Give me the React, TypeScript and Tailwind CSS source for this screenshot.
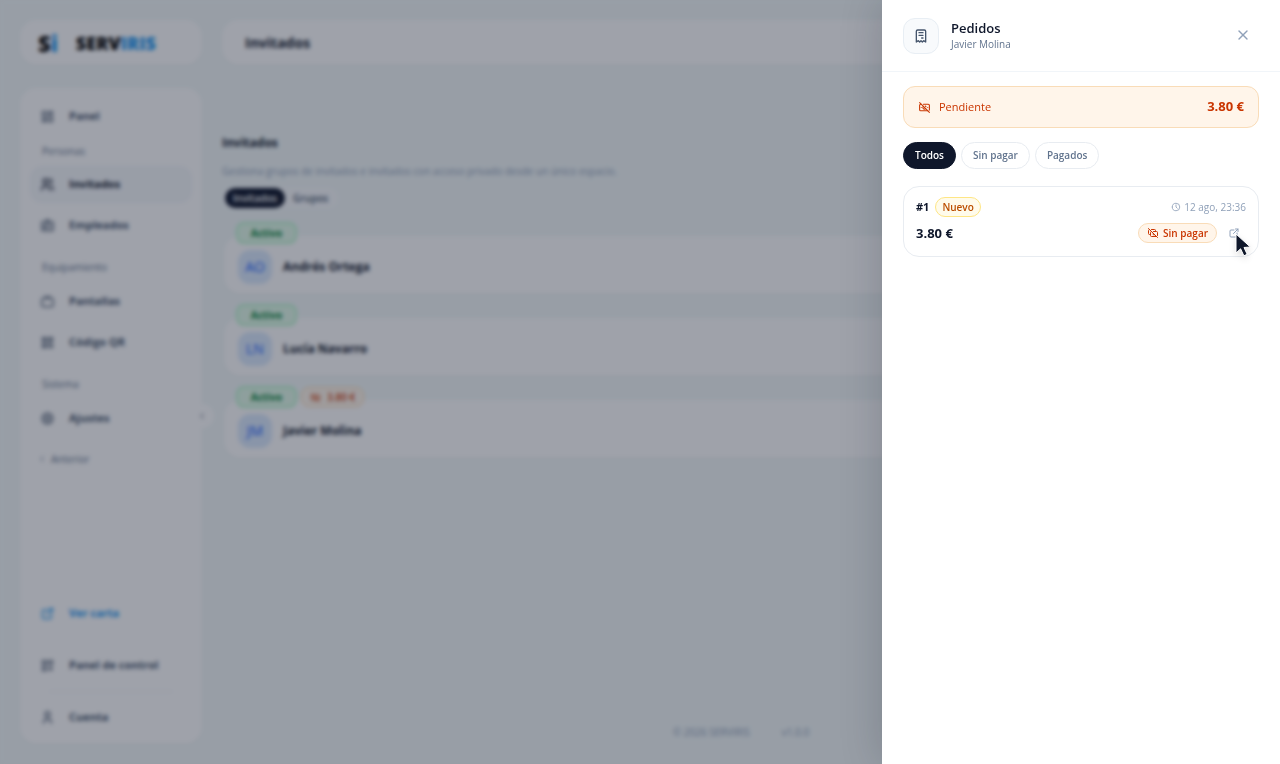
import React, { useState } from 'react';
import {
  TbCashBanknoteOff,
  TbCashOff,
  TbChevronLeft,
  TbClock,
  TbDeviceTv,
  TbExternalLink,
  TbIdBadge2,
  TbLayoutDashboard,
  TbLayoutGridAdd,
  TbQrcode,
  TbReceipt,
  TbSettings,
  TbUser,
  TbUsers,
  TbX,
} from 'react-icons/tb';
import type { IconType } from 'react-icons';

interface NavItemProps {
  icon: IconType;
  label: string;
  active?: boolean;
  accent?: boolean;
}

const NavItem: React.FC<NavItemProps> = ({ icon: Icon, label, active, accent }) => (
  <a
    href="#"
    className={`flex h-[37px] items-center gap-[14px] rounded-xl px-[10px] text-[11px] font-bold ${
      active ? 'bg-slate-100/70 text-slate-900' : accent ? 'text-[#1a94f0]' : 'text-slate-600'
    }`}
  >
    <Icon size={15} />
    {label}
  </a>
);

const NavTitle: React.FC<{ children: React.ReactNode }> = ({ children }) => (
  <p className="px-3 text-[10px] leading-4 font-medium text-slate-500">{children}</p>
);

const Sidebar: React.FC = () => (
  <aside className="relative flex flex-1 flex-col rounded-2xl bg-white px-[10px] pt-[10px] pb-2 shadow-xs">
    <nav className="flex flex-col">
      <NavItem icon={TbLayoutDashboard} label="Panel" />
      <div className="mt-2 flex flex-col gap-1">
        <NavTitle>Personas</NavTitle>
        <div className="flex flex-col gap-1 pt-[3px]">
          <NavItem icon={TbUsers} label="Invitados" active />
          <NavItem icon={TbIdBadge2} label="Empleados" />
        </div>
      </div>
      <div className="mt-[15px] flex flex-col gap-1">
        <NavTitle>Equipamiento</NavTitle>
        <div className="flex flex-col gap-1 pt-1">
          <NavItem icon={TbDeviceTv} label="Pantallas" />
          <NavItem icon={TbQrcode} label="Código QR" />
        </div>
      </div>
      <div className="mt-[15px] flex flex-col gap-1">
        <NavTitle>Sistema</NavTitle>
        <div className="pt-1">
          <NavItem icon={TbSettings} label="Ajustes" />
        </div>
      </div>
      <button type="button" className="mt-[14px] flex items-center gap-1 px-[7px] text-[10px] leading-4 font-medium text-slate-500">
        <TbChevronLeft size={10} />
        Anterior
      </button>
    </nav>

    <div className="mt-auto flex flex-col gap-[15px]">
      <NavItem icon={TbExternalLink} label="Ver carta" accent />
      <NavItem icon={TbLayoutGridAdd} label="Panel de control" />
      <div className="relative">
        <hr className="absolute inset-x-5 -top-2 border-slate-100" />
        <NavItem icon={TbUser} label="Cuenta" />
      </div>
    </div>

    <button
      type="button"
      aria-label="Contraer menú"
      className="absolute top-1/2 -right-3 flex size-6 -translate-y-3 items-center justify-center rounded-full bg-white text-slate-600"
    >
      <TbChevronLeft size={10} />
    </button>
  </aside>
);

interface Guest {
  initials: string;
  name: string;
  debt?: string;
}

const guests: Guest[] = [
  { initials: 'AO', name: 'Andrés Ortega' },
  { initials: 'LN', name: 'Lucía Navarro' },
  { initials: 'JM', name: 'Javier Molina', debt: '3.80 €' },
];

const GuestRow: React.FC<{ guest: Guest }> = ({ guest }) => (
  <li className="relative flex h-[58px] items-center gap-[11px] rounded-2xl bg-white px-[14px] pt-1 shadow-xs">
    <div className="absolute -top-[14px] left-3 flex items-center gap-1">
      <span className="w-[61px] rounded-lg border-2 border-green-200 bg-[#e3fbea] text-center text-[10px] leading-[18px] font-bold text-green-700">
        Activo
      </span>
      {guest.debt && (
        <span className="flex items-center gap-[6px] rounded-lg border border-orange-200 bg-orange-50 px-2 text-[10px] leading-[18px] font-semibold text-orange-700">
          <TbCashBanknoteOff size={11} />
          {guest.debt}
        </span>
      )}
    </div>
    <span className="flex size-[34px] items-center justify-center rounded-xl bg-blue-100 text-sm font-medium text-blue-600">
      {guest.initials}
    </span>
    <span className="text-xs font-bold text-slate-900">{guest.name}</span>
  </li>
);

const GuestsPage: React.FC = () => (
  <div className="flex h-full gap-5 bg-[#f3f9f9] p-5">
    <div className="flex w-[182px] shrink-0 flex-col gap-[23px]">
      <div className="flex h-[45px] items-center gap-[18px] rounded-2xl bg-white px-[18px] text-black shadow-xs">
        <span className="text-[22px] leading-6 font-extrabold">
          S<span className="text-[#1a94f0]">i</span>
        </span>
        <span className="text-lg font-extrabold">
          SERV<span className="text-[#1a94f0]">IRIS</span>
        </span>
      </div>
      <Sidebar />
    </div>

    <div className="flex min-w-0 flex-1 flex-col">
      <header className="flex h-[45px] shrink-0 items-center rounded-2xl bg-white px-[23px] shadow-xs">
        <h1 className="text-sm font-bold text-slate-900">Invitados</h1>
      </header>

      <main className="flex-1 pt-[68px]">
        <h2 className="text-xs leading-5 font-bold text-slate-900">Invitados</h2>
        <p className="mt-[10px] text-[10px] leading-4 text-slate-400">
          Gestiona grupos de invitados e invitados con acceso privado desde un único espacio.
        </p>
        <div className="mt-2 inline-flex rounded-full bg-slate-50 px-[3px] py-[1px] text-[10px] leading-5">
          <button type="button" className="w-[60px] rounded-full bg-slate-900 font-semibold text-white">Invitados</button>
          <button type="button" className="px-2 font-semibold text-slate-600">Grupos</button>
        </div>
        <ul className="mt-[27px] flex flex-col gap-6 px-[2px]">
          {guests.map((guest) => (
            <GuestRow key={guest.name} guest={guest} />
          ))}
        </ul>
      </main>

      <footer className="flex justify-center gap-8 pb-1 text-[10px] leading-4 text-slate-400">
        <span>© 2026 SERVIRIS</span>
        <span>v1.0.0</span>
      </footer>
    </div>
  </div>
);

const filters = ['Todos', 'Sin pagar', 'Pagados'];

const OrdersDrawer: React.FC = () => {
  const [filter, setFilter] = useState('Todos');

  return (
    <section
      role="dialog"
      aria-label="Pedidos"
      className="absolute inset-y-0 right-0 w-full max-w-[398px] bg-white shadow-[0_0_40px_rgba(15,23,42,0.2)]"
    >
      <header className="flex h-[72px] items-center gap-3 border-b border-slate-100 px-[21px]">
        <span className="flex size-9 items-center justify-center rounded-xl border border-[#e8eef4] bg-slate-50 text-slate-600">
          <TbReceipt size={16} />
        </span>
        <div className="flex-1 pb-[2px]">
          <h2 className="text-[13px] leading-[18px] font-semibold text-slate-900">Pedidos</h2>
          <p className="text-[10px] leading-[14px] text-slate-500">Javier Molina</p>
        </div>
        <button type="button" aria-label="Cerrar" className="flex size-8 items-center justify-center pb-[2px] text-slate-400">
          <TbX size={16} />
        </button>
      </header>

      <div className="px-[21px] pt-[14px]">
        <div className="flex h-[42px] items-center gap-2 rounded-xl border border-[#f9dcb8] bg-[#fff5ea] px-[14px] text-[11px] text-orange-700">
          <TbCashBanknoteOff size={13} />
          <span className="flex-1 font-medium">Pendiente</span>
          <span className="text-[13px] font-bold">3.80 €</span>
        </div>

        <div className="mt-[14px] flex gap-[5px]">
          {filters.map((name) => (
            <button
              key={name}
              type="button"
              onClick={() => setFilter(name)}
              className={`h-[27px] rounded-full border px-[11px] text-[10px] font-semibold ${
                filter === name
                  ? 'border-slate-900 bg-slate-900 text-white'
                  : 'border-[#e8ecf1] bg-white text-slate-500'
              }`}
            >
              {name}
            </button>
          ))}
        </div>

        <article className="mt-[17px] flex flex-col gap-[6px] rounded-2xl border border-[#e8ecf1] bg-white px-3 pt-[10px] pb-[13px]">
          <div className="flex items-center gap-[6px]">
            <span className="text-[11px] font-bold text-slate-900">#1</span>
            <span className="rounded-full border border-amber-200 bg-amber-50 px-[6px] text-[10px] leading-[18px] font-semibold text-amber-700">
              Nuevo
            </span>
            <span className="ml-auto flex items-center gap-[3px] text-[10px] leading-4 text-slate-400">
              <TbClock size={10} />
              12 ago, 23:36
            </span>
          </div>
          <div className="flex items-center">
            <span className="flex-1 text-[13px] leading-5 font-bold text-slate-900">3.80 €</span>
            <span className="flex items-center gap-1 rounded-full border border-[#f9dcb8] bg-[#fff5ea] px-2 text-[10px] leading-[18px] font-semibold text-orange-700">
              <TbCashOff size={12} />
              Sin pagar
            </span>
            <a href="#" aria-label="Abrir pedido" className="mr-[6px] ml-[11px] text-slate-400">
              <TbExternalLink size={12} />
            </a>
          </div>
        </article>
      </div>

      <svg
        aria-hidden="true"
        className="pointer-events-none absolute top-[232px] right-[28px] drop-shadow-md"
        width="18"
        height="26"
        viewBox="0 0 18 26"
      >
        <path d="M2 2v19l4.6-4.2 3.3 7 3.3-1.5-3.2-6.8 6.3-.5z" fill="#0f172a" stroke="#fff" strokeWidth="1" strokeLinejoin="round" />
      </svg>
    </section>
  );
};

const App: React.FC = () => (
  <div className="relative h-screen overflow-hidden font-['Open_Sans','Noto_Sans',sans-serif]">
    <GuestsPage />
    <div className="absolute inset-0 bg-slate-900/40 backdrop-blur-[2px]" />
    <OrdersDrawer />
  </div>
);

export default App;
